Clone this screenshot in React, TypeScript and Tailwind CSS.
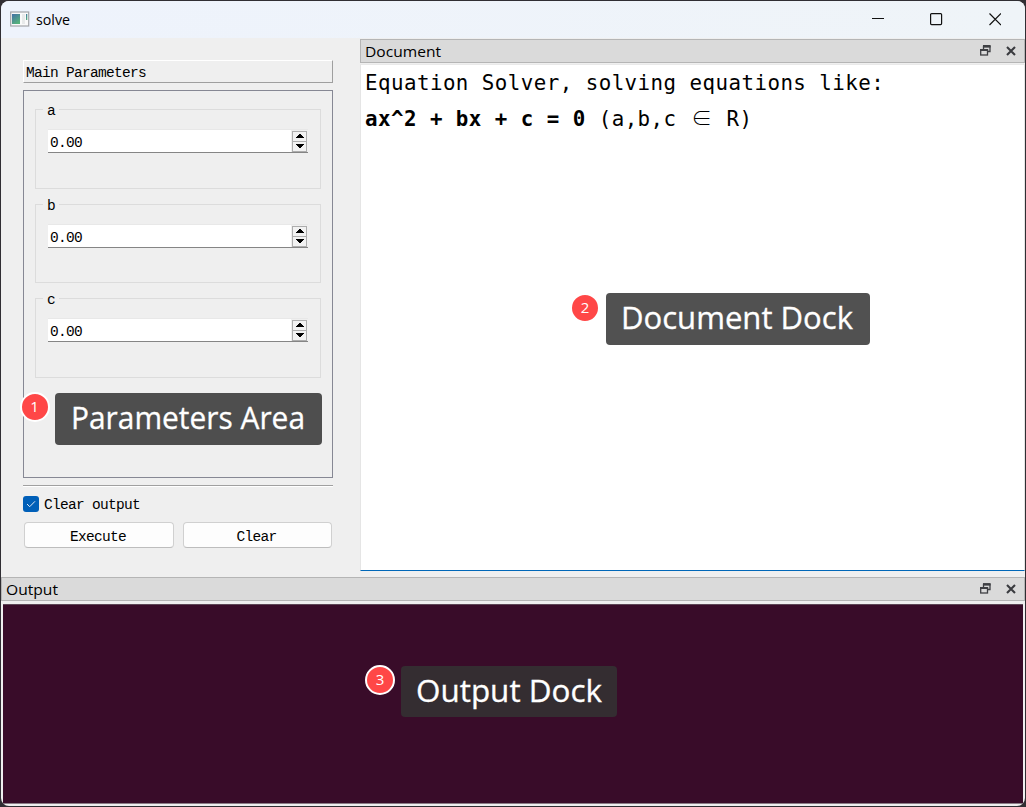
import type { ReactNode } from 'react';

const ui = "font-['Open_Sans','Noto_Sans',sans-serif]";
const mono = "font-['Liberation_Mono',monospace]";

function AppIcon() {
  return (
    <svg width="20" height="17" viewBox="0 0 20 17" className="shrink-0">
      <defs>
        <linearGradient id="pane" x1="0" y1="0" x2="0.6" y2="1">
          <stop offset="0" stopColor="#4470a6" />
          <stop offset="1" stopColor="#56b27c" />
        </linearGradient>
      </defs>
      <rect x="0.7" y="1" width="18" height="14" fill="#fafafa" stroke="#a3a5a8" strokeWidth="1.2" />
      <rect x="2" y="3" width="8" height="10" fill="url(#pane)" />
      <rect x="12" y="3" width="3" height="10" fill="#e8eaea" />
      <rect x="16" y="3" width="1.3" height="6" fill="url(#pane)" />
    </svg>
  );
}

function DockTitle({ title, width }: { title: string; width: number }) {
  return (
    <div className={`${ui} flex h-[24px] shrink-0 items-center justify-between border border-[#b5b5b5] bg-[#dadada] pl-[4px] pr-[8px] text-[15px] text-black`}>
      <svg width="120" height="22" className="shrink-0 overflow-visible">
        <text x="0" y="17" textLength={width} lengthAdjust="spacingAndGlyphs">{title}</text>
      </svg>
      <div className="flex items-center gap-[15px]">
        <svg width="11" height="11" viewBox="0 0 11 11" fill="none" stroke="#3f4044" className="-mt-px">
          <path d="M3.5 4V1.5h6.500v5H8" strokeWidth="1.3" />
          <path d="M3 1.300h7.600" strokeWidth="2.400" />
          <rect x="0.7" y="5" width="6.8" height="5" strokeWidth="1.3" />
          <path d="M0 5h8.100" strokeWidth="2" />
        </svg>
        <svg width="10" height="10" viewBox="0 0 10 10" stroke="#3a3b3f" strokeWidth="2.1">
          <path d="M1 1l8 8M9 1l-8 8" />
        </svg>
      </div>
    </div>
  );
}

function SpinBox() {
  return (
    <div className="flex h-[24px] w-[260px] justify-between border-b border-t border-b-[#858585] border-t-[#e8e8e8] bg-white">
      <span className="pl-[2px] pt-[3px] leading-[20px]">0.00</span>
      <div className="flex w-[17px] flex-col bg-[#efefef] pl-px pr-px pt-px">
        <div className="flex h-[11px] w-[15px] items-start justify-center border border-[#adadad] bg-[#f2f2f2] pt-[2px]">
          <svg width="8" height="4" viewBox="0 0 8 4" shapeRendering="crispEdges"><path d="M3 0h2v1h1v1h1v1h1v1H0V3h1V2h1V1h1z" /></svg>
        </div>
        <div className="-mt-px flex h-[11px] w-[15px] items-start justify-center border border-[#adadad] bg-[#f2f2f2] pt-[2px]">
          <svg width="8" height="4" viewBox="0 0 8 4" shapeRendering="crispEdges"><path d="M0 0h8v1H7v1H6v1H5v1H3V3H2V2H1V1H0z" /></svg>
        </div>
      </div>
    </div>
  );
}

function ParamGroup({ name, className }: { name: string; className: string }) {
  return (
    <fieldset className={`${className} w-[286px] border border-[#dcdcdc] pl-[12px]`}>
      <legend className="-ml-[5px] h-[14px] w-[16px] pl-[4px] leading-[19px]">{name}</legend>
      <div className="pt-[13px]">
        <SpinBox />
      </div>
    </fieldset>
  );
}

function PushButton({ children, className }: { children: ReactNode; className: string }) {
  return (
    <button className={`${className} h-[26px] rounded-[4px] border border-[#d0d0d0] border-b-[#bdbdbd] bg-[#fdfdfd] pr-[2px] pt-[3px] leading-[20px]`}>
      {children}
    </button>
  );
}

function Callout({ className, text, width, pad }: { className: string; text: string; width: number; pad: number }) {
  return (
    <div className={`${ui} ${className} absolute rounded-[4px] text-[31.500px] text-white`}>
      <svg width="100%" height="100%" fill="#fff" stroke="#fff" strokeWidth="0.3" className="block">
        <text x={pad} y="35.500" textLength={width} lengthAdjust="spacingAndGlyphs">{text}</text>
      </svg>
    </div>
  );
}

function Badge({ className, n }: { className: string; n: number }) {
  return (
    <div className={`${ui} ${className} absolute flex size-[30px] items-center justify-center rounded-full border-[2.5px] border-white bg-[#ff4747] pb-px text-[15px] font-medium leading-none text-white`}>
      {n}
    </div>
  );
}

export default function App() {
  return (
    <div className="h-[807px] w-[1026px] bg-[#302e33] p-px">
      <div className="relative flex h-[805px] w-[1024px] flex-col overflow-hidden rounded-[8px] bg-[#efefef] text-black">
        <header className={`${ui} flex h-[37px] shrink-0 items-center justify-between bg-gradient-to-r from-[#eef3fc] to-[#eff4f8] pl-[9px] pr-[24px] text-[14px]`}>
          <div className="flex items-center gap-[6px]">
            <AppIcon />
            <svg width="60" height="22"><text x="0" y="16" textLength="34" lengthAdjust="spacingAndGlyphs">solve</text></svg>
          </div>
          <svg width="130" height="14" viewBox="-1 0 130 14" fill="none" stroke="#111" strokeWidth="1.2" className="-mt-[2px]">
            <path d="M0 6.5h12" />
            <rect x="58.6" y="1.6" width="11" height="11" rx="1" />
            <path d="M117.500 1.500l11.500 11.500M129 1.500l-11.500 11.500" />
          </svg>
        </header>

        <div className="flex h-[539px] shrink-0">
          <aside className={`${mono} w-[359px] shrink-0 pl-[22px] pt-[22px] text-[14.500px] tracking-[-0.700px]`}>
            <div className="h-[23px] w-[310px] border border-b-[#9f9f9f] border-l-white border-r-[#9f9f9f] border-t-white pl-[2px] leading-[25px]">
              Main Parameters
            </div>
            <div className="mt-[7px] h-[388px] w-[310px] border border-[#868894] pl-[11px] pt-[11px]">
              <ParamGroup name="a" className="h-[87px]" />
              <ParamGroup name="b" className="mt-[8px] h-[86px]" />
              <ParamGroup name="c" className="mt-[8px] h-[87px]" />
            </div>
            <div className="mt-[7px] h-[2px] w-[310px] border-b border-t border-b-white border-t-[#a0a0a0]" />
            <label className="mt-[8px] flex h-[18px] items-center gap-[5px]">
              <span className="flex size-[16px] items-center justify-center rounded-[3px] bg-[#005fb8]">
                <svg width="10" height="8" viewBox="0 0 10 8" fill="none" stroke="#dfeaf5"><path d="M1 4l2.700 2.700L9 1.300" /></svg>
              </span>
              <span className="pt-[4px]">Clear output</span>
            </label>
            <div className="mt-[9px] flex gap-[9px] pl-px">
              <PushButton className="w-[150px]">Execute</PushButton>
              <PushButton className="w-[149px]">Clear</PushButton>
            </div>
          </aside>

          <section className="flex min-w-0 grow flex-col pt-px">
            <DockTitle title="Document" width={76} />
            <div className="mt-px h-[507px] border border-b-[#0067b8] border-l-[#e5e5e5] border-r-[#e5e5e5] border-t-[#e9e9e9] bg-white pl-[4px] font-['DejaVu_Sans_Mono',monospace] text-[20.800px] leading-[36px] tracking-[0.460px]">
              <p className="whitespace-pre">Equation Solver, solving equations like:</p>
              <p className="whitespace-pre"><b>ax^2 + bx + c = 0</b> (a,b,c <span className="inline-block w-[24px] text-center font-['Noto_Sans_CJK_SC',sans-serif] font-light leading-none tracking-normal">∈</span> R)</p>
            </div>
          </section>
        </div>

        <section className="flex grow flex-col">
          <DockTitle title="Output" width={52} />
          <div className="mx-[2px] mb-[2px] mt-[3px] grow border-b border-t border-b-[#8a7c86] border-t-[#5d4656] bg-[#390c29]" />
        </section>

        <Badge className="left-[18.500px] top-[391px]" n={1} />
        <Callout className="left-[54px] top-[392px] h-[52px] w-[267px] bg-[#4e4e4e]" text="Parameters Area" width={234} pad={16} />
        <Badge className="left-[569px] top-[291.500px]" n={2} />
        <Callout className="left-[605px] top-[292px] h-[52px] w-[264px] bg-[#515151]" text="Document Dock" width={232} pad={15} />
        <Badge className="left-[364px] top-[664px]" n={3} />
        <Callout className="left-[400px] top-[665px] h-[51px] w-[216px] bg-[#342d31]" text="Output Dock" width={186} pad={15} />
      </div>
    </div>
  );
}
